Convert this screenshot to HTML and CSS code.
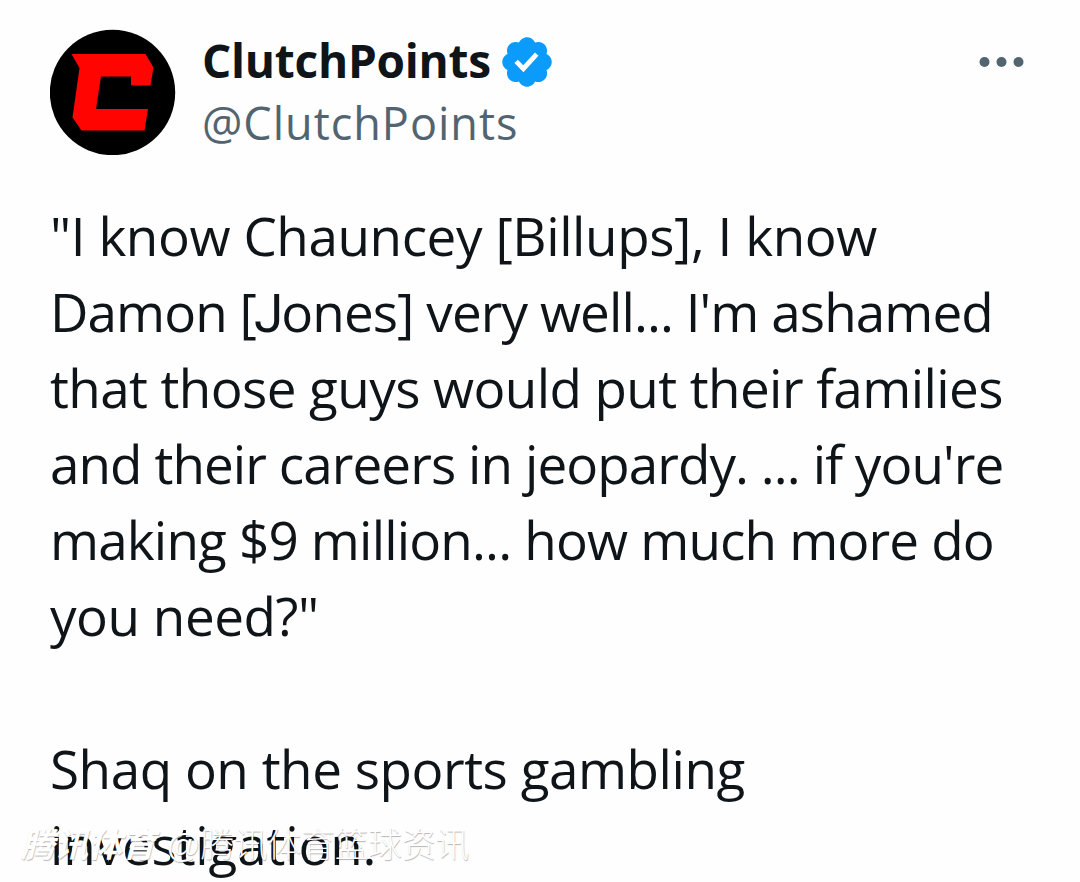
FILE: index.html
```html
<!DOCTYPE html>
<html lang="en">
<head>
    <meta charset="UTF-8">
    <title>ClutchPoints</title>
    <link rel="stylesheet" href="styles.css">
</head>
<body>
    <article class="post">
        <header class="post-header">
            <svg class="avatar" viewBox="0 0 126 126">
                <circle cx="62.500" cy="63.500" r="62.700" fill="#000"/>
                <path d="M21.500 25H95.500L103.500 38.500L100.500 56.500H81V47.500H51L46 80H98L94.500 101.500H31.500L22.500 88.500L29.500 39Z" fill="#ff0400"/>
            </svg>
            <div class="author">
                <div class="name-row">
                    <span class="name">ClutchPoints</span>
                    <svg class="badge" viewBox="0 0 22 22">
                        <path d="M20.396 11c-.018-.646-.215-1.275-.57-1.816-.354-.54-.852-.972-1.438-1.246.223-.607.27-1.264.14-1.897-.131-.634-.437-1.218-.882-1.687-.47-.445-1.053-.75-1.687-.882-.633-.13-1.290-.083-1.897.14-.273-.587-.704-1.086-1.245-1.440S11.647 1.620 11 1.604c-.646.017-1.273.213-1.813.568s-.969.854-1.240 1.440c-.608-.223-1.267-.272-1.902-.140-.635.130-1.220.436-1.690.882-.445.470-.749 1.055-.878 1.688-.130.633-.080 1.290.144 1.896-.587.274-1.087.705-1.443 1.245-.356.540-.555 1.170-.574 1.817.020.647.218 1.276.574 1.817.356.540.856.972 1.443 1.245-.224.606-.274 1.263-.144 1.896.130.634.433 1.218.877 1.688.470.443 1.054.747 1.687.878.633.132 1.290.084 1.897-.136.274.586.705 1.084 1.246 1.439.540.354 1.170.551 1.816.569.647-.016 1.276-.213 1.817-.567s.972-.854 1.245-1.440c.604.239 1.266.296 1.903.164.636-.132 1.220-.447 1.680-.907.460-.460.776-1.044.908-1.681s.075-1.299-.165-1.903c.586-.274 1.084-.705 1.439-1.246.354-.540.551-1.170.569-1.816zM9.662 14.850l-3.429-3.428 1.293-1.302 2.072 2.072 4.400-4.794 1.347 1.246z" fill="#0a9bfb"/>
                    </svg>
                </div>
                <div class="handle">@ClutchPoints</div>
            </div>
            <svg class="more" viewBox="0 0 46 12">
                <circle cx="5.500" cy="6" r="5"/>
                <circle cx="22.500" cy="6" r="5"/>
                <circle cx="39.500" cy="6" r="5"/>
            </svg>
        </header>
        <p class="text">
            <span class="line line-1">"I know Chauncey [Billups], I know</span>
            <span class="line line-2">Damon [<span class="letter-j">J</span>ones] very well... I'm ashamed</span>
            <span class="line line-3">that those guys would put their families</span>
            <span class="line line-4">and their careers in jeopardy. ... if you're</span>
            <span class="line line-5">making $9 million... how much more do</span>
            <span class="line line-6">you need?"</span>
        </p>
        <p class="text">
            <span class="line line-7">Shaq on the sports gambling</span>
            <span class="line line-8">investigation.</span>
        </p>
    </article>
    <div class="watermark">
        <span class="brand">腾讯体育</span>
        <span class="source">@腾讯体育篮球资讯</span>
    </div>
</body>
</html>
```

FILE: styles.css
```css
body {
    margin: 0;
    height: 882px;
    overflow: hidden;
    background: #fefefe;
    color: #0f1419;
    font-family: "Open Sans", "Noto Sans", sans-serif;
}
.post {
    padding: 29px 50px 0;
}
.post-header {
    display: flex;
    align-items: flex-start;
    height: 169px;
}
.avatar {
    width: 126px;
    height: 126px;
    margin-right: 26px;
}
.author {
    flex: 1;
    margin-top: -1px;
}
.name-row {
    display: flex;
    align-items: center;
    height: 64px;
}
.name {
    font-size: 46px;
    font-weight: 700;
    line-height: 64px;
    letter-spacing: -0.250px;
}
.badge {
    width: 58px;
    height: 58px;
    margin: 3px 0 0 7px;
}
.handle {
    font-size: 45px;
    line-height: 62px;
    letter-spacing: 1px;
    color: #536471;
}
.more {
    width: 46px;
    height: 12px;
    margin: 27px 5px 0 0;
    fill: #536471;
}
.text {
    margin: 0 0 77px;
    font-size: 53px;
    line-height: 76px;
}
.text:last-child {
    margin-bottom: 0;
}
.line {
    display: block;
    white-space: nowrap;
}
.line-1 {
    letter-spacing: -0.420px;
}
.line-2 {
    letter-spacing: -0.920px;
}
.line-3 {
    letter-spacing: -0.590px;
}
.line-4 {
    letter-spacing: -0.930px;
}
.line-5 {
    letter-spacing: -0.830px;
}
.line-6,
.line-7 {
    letter-spacing: -0.460px;
}
.line-8 {
    letter-spacing: -0.150px;
}
/* J that stays on the baseline */
.letter-j {
    margin-left: -2px;
    margin-right: -1px;
    font-family: Roboto, sans-serif;
    line-height: 1;
}
.watermark {
    position: absolute;
    left: 21px;
    top: 822px;
    display: flex;
    gap: 11px;
    font-family: "Liberation Sans", "Noto Sans CJK SC", sans-serif;
    font-size: 33.600px;
    line-height: 48px;
    color: #fff;
    text-shadow: 0.500px 0.500px 1px rgba(0, 0, 0, 0.3);
}
.brand {
    font-weight: 700;
    font-style: italic;
}
.source {
    font-weight: 300;
}
```
